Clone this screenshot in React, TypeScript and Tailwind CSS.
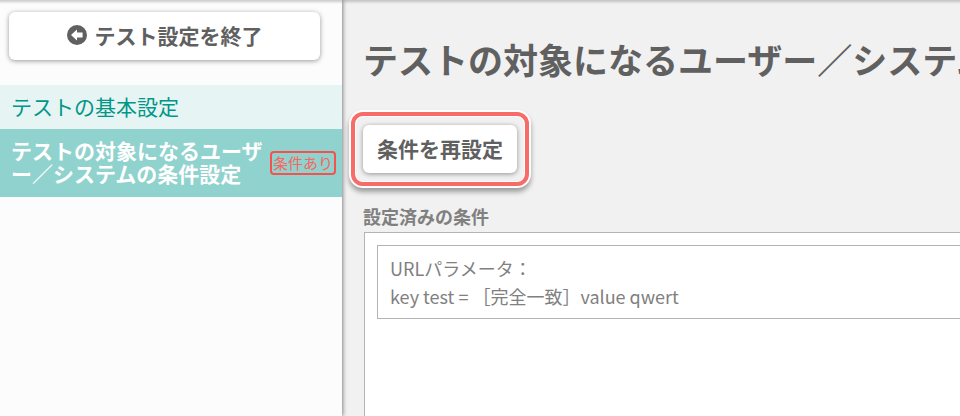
import React from 'react';

const navItems = [
  { id: 'basic', label: 'テストの基本設定', active: false },
  {
    id: 'target',
    label: 'テストの対象になるユーザー／システムの条件設定',
    active: true,
    badge: '条件あり',
  },
];

const conditions = [{ id: 'url', title: 'URLパラメータ：', detail: 'key test = ［完全一致］value qwert' }];

const BackIcon = () => (
  <svg viewBox="0 0 20 20" className="w-5 h-5" aria-hidden="true">
    <circle cx="10" cy="10" r="10" fill="#606060" />
    <path d="M4 10 L10 4.4 V7.5 H15.6 V12.5 H10 V15.6 Z" fill="#fff" />
  </svg>
);

const App: React.FC = () => {
  return (
    <div
      lang="ja"
      className="relative flex h-screen overflow-hidden bg-[#f1f1f1] text-[#606060] font-['Noto_Sans_CJK_JP',sans-serif]"
    >
      {/* Shadow cast by the bar above */}
      <div className="absolute inset-x-0 top-0 z-20 h-1 bg-linear-to-b from-black/20 to-transparent" />

      {/* Sidebar */}
      <aside className="z-10 w-[342px] shrink-0 bg-[#fcfcfc] shadow-[1px_0_4px_rgba(0,0,0,0.45)]">
        <div className="pt-3 pl-[9px] pr-[22px]">
          <button
            type="button"
            className="flex h-12 w-full items-center justify-center gap-2 rounded-md bg-white pb-[3px] text-[21px] leading-6 font-bold shadow-[0_1px_5px_rgba(0,0,0,0.4)]"
          >
            <BackIcon />
            <span>テスト設定を終了</span>
          </button>
        </div>

        <nav className="mt-[25px]">
          {navItems.map(item => (
            <a
              key={item.id}
              href={`#${item.id}`}
              className={`flex items-center pl-[11px] pr-[6px] text-[21px] ${
                item.active
                  ? 'h-[68px] bg-[#90d2cd] leading-[23px] font-bold text-white'
                  : 'h-11 bg-[#e6f4f3] pb-[2px] leading-6 text-[#009688]'
              }`}
            >
              <span className={`flex-1 break-all ${item.active ? 'pb-[2px]' : ''}`}>{item.label}</span>
              {item.badge && (
                <span className="shrink-0 rounded-sm border-2 border-[#f8504e] px-px text-[15px] leading-5 font-normal text-[#f8665f]">
                  {item.badge}
                </span>
              )}
            </a>
          ))}
        </nav>
      </aside>

      {/* Main Content */}
      <main className="flex min-w-0 flex-1 flex-col overflow-hidden pt-[35px] pl-[21px]">
        <h1 className="text-[35px] leading-12 font-bold whitespace-nowrap">
          テストの対象になるユーザー／システムの条件設定
        </h1>

        <div className="relative mt-[42px] self-start">
          <button
            type="button"
            className="h-12 rounded-md bg-white px-[14px] pb-[3px] text-[21px] leading-6 font-bold shadow-[0_1px_5px_rgba(0,0,0,0.4)]"
          >
            条件を再設定
          </button>
          <div className="pointer-events-none absolute -inset-x-[12px] -inset-y-[13px] rounded-xl border-4 border-[#f76c66] shadow-[0_0_0_2px_#fff,inset_0_0_0_1px_#fff,0_4px_5px_2px_rgba(0,0,0,0.35)]" />
        </div>

        <h2 className="mt-[31px] text-[18px] leading-6 font-bold text-[#808080]">設定済みの条件</h2>
        <div className="mt-1 ml-px w-[120%] flex-1 border border-b-0 border-[#b4b4b4] bg-white p-3">
          {conditions.map(condition => (
            <div
              key={condition.id}
              className="border border-[#b4b4b4] px-3 py-2 text-[18px] leading-7 text-[#808080]"
            >
              <p>{condition.title}</p>
              <p>{condition.detail}</p>
            </div>
          ))}
        </div>
      </main>
    </div>
  );
};

export default App;
